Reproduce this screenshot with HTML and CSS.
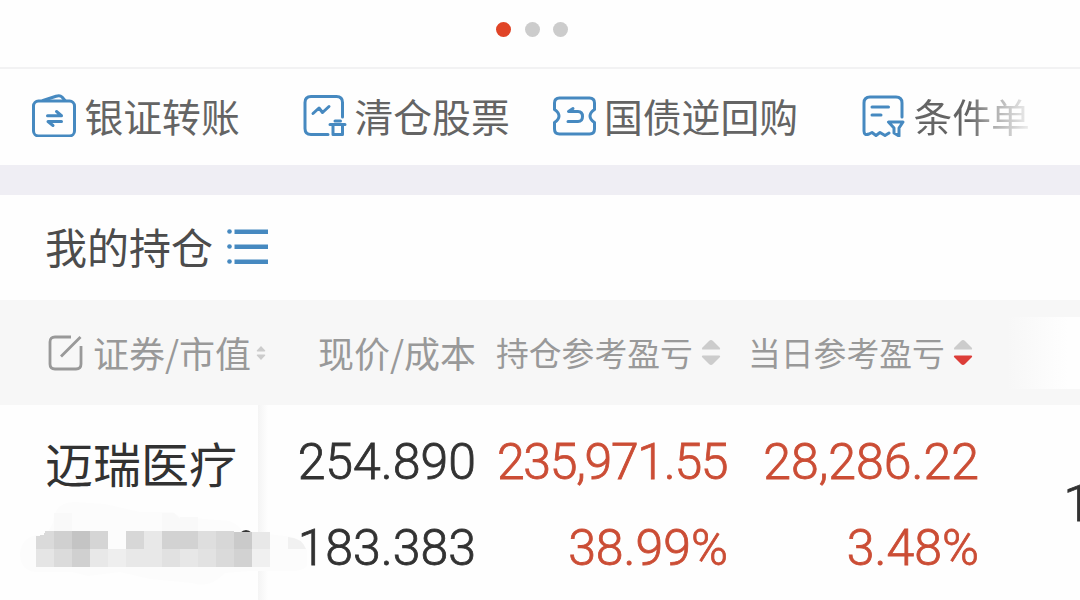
FILE: index.html
```html
<!DOCTYPE html>
<html lang="zh-CN">
<head>
<meta charset="utf-8">
<title>我的持仓</title>
<link rel="stylesheet" href="styles.css">
</head>
<body>
<div class="pager"><span class="dot dot-on"></span><span class="dot"></span><span class="dot"></span></div>

<nav class="tools">
  <a class="tool">
    <svg class="tool-icon" viewBox="0 0 46 46"><g class="line"><rect x="2.5" y="10" width="41" height="35" rx="5"/><path d="M12 9.5L25 5.300Q29 4 31 6L34 9.500"/><path d="M16.500 24.700H30.500L25.500 20.500M30.500 30.500H17L22 34.500"/></g></svg>
    <span class="tool-name">银证转账</span>
  </a>
  <a class="tool">
    <svg class="tool-icon" viewBox="0 0 46 46"><g class="line"><path d="M41.500 26V11.500Q41.500 5.500 35.500 5.500H10Q4 5.500 4 11.500V37.500Q4 43.500 10 43.500H27"/><path d="M12 22.500L18 17L21.500 21.500L28 15.500"/><path d="M29 33.500H44M32 34V43.500H41.500V34M34 30H39.500"/></g></svg>
    <span class="tool-name">清仓股票</span>
  </a>
  <a class="tool">
    <svg class="tool-icon" viewBox="0 0 46 46"><path class="line" d="M8.500 7H38.500Q43.500 7 43.500 12V18.500Q39 21.500 39 25Q39 28.500 43.500 31.500V38Q43.500 43 38.500 43H8.500Q3.500 43 3.500 38V31.500Q8 28.500 8 25Q8 21.500 3.500 18.500V12Q3.500 7 8.500 7Z"/><path class="line" d="M22 17.500L17.500 20.500H27Q31.500 20.500 31.500 25.500Q31.500 30.500 27 30.500H17"/></svg>
    <span class="tool-name">国债逆回购</span>
  </a>
  <a class="tool">
    <svg class="tool-icon" viewBox="0 0 46 46"><g class="line"><path d="M42 26V12Q42 6 36 6H10Q4 6 4 12V40Q4 45 9 43L12 41.500L16 44.500L20 41.500L25 44.500L29 42"/><path d="M12 16H28.500M12 24H21"/><path d="M28.500 31H43L39 37V45L34 42V37Z"/></g></svg>
    <span class="tool-name tool-fade">条件单</span>
  </a>
</nav>

<div class="band"></div>

<header class="title">
  <h1>我的持仓</h1>
  <svg class="list-icon" viewBox="0 0 42 36"><circle cx="2.500" cy="2.500" r="2.300"/><circle cx="2.500" cy="17.500" r="2.300"/><circle cx="2.500" cy="32.500" r="2.300"/><path d="M7.500 .5H41V5H7.500ZM7.500 15.500H41V20H7.500ZM7.500 30.500H41V35H7.500Z"/></svg>
</header>

<div class="heads">
  <div class="head head-name">
    <svg class="edit-icon" viewBox="0 0 36 36"><path d="M23 2H7Q2 2 2 7V29Q2 34 7 34H28Q33 34 33 29V11M13 21.500L32.500 2"/></svg>
    <span class="big">证券/市值</span>
    <svg class="sort-small" viewBox="0 0 20 28"><path d="M10 0L18.500 9Q19 11 17 11H3Q1 11 1.500 9ZM10 28L18.500 19Q19 17 17 17H3Q1 17 1.500 19Z"/></svg>
  </div>
  <div class="head"><span class="big">现价/成本</span></div>
  <div class="head">
    <span>持仓参考盈亏</span>
    <svg class="sort" viewBox="0 0 20 26"><path d="M10 0Q11 0 12 1L18.500 7.500Q20 9.500 18 9.500H2Q0 9.500 1.500 7.500L8 1Q9 0 10 0Z"/><path d="M10 25Q11 25 12 24L18.500 17.500Q20 15.500 18 15.500H2Q0 15.500 1.500 17.500L8 24Q9 25 10 25Z"/></svg>
  </div>
  <div class="head">
    <span>当日参考盈亏</span>
    <svg class="sort" viewBox="0 0 20 26"><path d="M10 0Q11 0 12 1L18.500 7.500Q20 9.500 18 9.500H2Q0 9.500 1.500 7.500L8 1Q9 0 10 0Z"/><path class="active" d="M10 25Q11 25 12 24L18.500 17.500Q20 15.500 18 15.500H2Q0 15.500 1.500 17.500L8 24Q9 25 10 25Z"/></svg>
  </div>
  <div class="edge-fade"></div>
</div>

<main class="holding">
  <div class="stock">迈瑞医疗</div>
  <div class="figures"><span>254.890</span><span>183.383</span></div>
  <div class="figures gain"><span class="tight">235,971.55</span><span>38.99%</span></div>
  <div class="figures gain"><span>28,286.22</span><span>3.48%</span></div>
  <div class="next">1</div>
  <svg class="mosaic" viewBox="0 0 310 95">
    <path fill="#fcfcfc" d="M36 40H44Q53 33 54 22Q57 7 75 7L105 9L140 17L173 17L180 22L205 24L230 26Q239 30 242 36L285 41Q303 42 307 56V70Q305 76 290 76H250L225 78Q210 94 192 88L150 84L120 77L88 81L72 77H36Q20 76 20 58Q22 43 36 40Z"/>
    <path fill="#f9f9f9" d="M54 18H72V36H54ZM162 18H174L180 24V36H162ZM180 22H198V36H180Z"/>
    <path fill="#333" d="M240 38Q246 32 252 38Z"/>
    <g shape-rendering="crispEdges">
      <path fill="#dadada" d="M36 41L44 40L45 36H54V54H36Z"/>
      <path fill="#d0d0d0" d="M54 36h18v18h-18z"/><path fill="#c4c4c4" d="M72 36h18v18h-18z"/><path fill="#d5d5d5" d="M90 36h18v18h-18z"/><path fill="#fcfcfc" d="M108 36h18v18h-18z"/><path fill="#d7d7d7" d="M126 36h18v18h-18z"/><path fill="#e8e8e8" d="M144 36h18v18h-18z"/><path fill="#d2d2d2" d="M162 36h36v18h-36z"/><path fill="#dedede" d="M198 36h18v18h-18z"/><path fill="#d7d7d7" d="M216 36h18v18h-18z"/><path fill="#cacaca" d="M234 37h18v17h-18z"/><path fill="#e8e8e8" d="M252 37h18v17h-18z"/>
      <path fill="#e5e5e5" d="M36 54h18v18h-18z"/><path fill="#dbdbdb" d="M54 54h18v18h-18z"/><path fill="#d0d0d0" d="M72 54h18v18h-18z"/><path fill="#e8e8e8" d="M90 54h18v18h-18z"/><path fill="#eee" d="M108 54h18v18h-18z"/><path fill="#e8e8e8" d="M126 54h36v18h-36z"/><path fill="#e1e1e1" d="M162 54h18v18h-18z"/><path fill="#e7e7e7" d="M180 54h18v18h-18z"/><path fill="#e2e2e2" d="M198 54h18v18h-18z"/><path fill="#dadada" d="M216 54h18v18h-18z"/><path fill="#d2d2d2" d="M234 54h18v18h-18z"/><path fill="#f0f0f0" d="M252 54h18v18h-18z"/>
    </g>
    <path fill="#f1f1f1" d="M288 42Q302 43 306 54H288Z"/>
  </svg>
</main>
</body>
</html>
```
FILE: styles.css
```css
* { box-sizing: border-box; }
body {
  margin: 0;
  width: 1080px;
  height: 600px;
  overflow: hidden;
  background: #fefefe;
  color: #323232;
  font-family: "Noto Sans CJK SC", sans-serif;
}
.pager {
  height: 69px;
  padding: 22px 0 0 496.400px;
  display: flex;
  gap: 13.5px;
  border-bottom: 2px solid #f2f2f3;
}
.dot { width: 15px; height: 15px; border-radius: 50%; background: #ccc; }
.dot-on { background: #e04427; }

.tools {
  height: 96px;
  display: grid;
  grid-template-columns: 270px 249.500px 309.500px 251px;
  padding-left: 31px;
}
.tool { display: flex; gap: 7.500px; align-items: flex-start; padding-top: 22px; white-space: nowrap; }
.tool-icon { width: 46px; height: 46px; flex: none; }
.line { fill: none; stroke: #4689c0; stroke-width: 3; stroke-linecap: round; stroke-linejoin: round; }
.tool-name { margin-top: -3px; font-size: 38.800px; line-height: 54px; color: #646464; }
.tool-fade {
  background: linear-gradient(90deg, #646464 55px, #aaa 78px, #e8e8e8 112px);
  background-clip: text;
  -webkit-background-clip: text;
  color: transparent;
}
.band { height: 30px; background: #efeef4; }

.title { height: 105px; display: flex; padding-left: 45px; gap: 14px; align-items: flex-start; }
.title h1 { margin: 22px 0 0; font-size: 42px; line-height: 58px; font-weight: 400; color: #4c4c4c; }
.list-icon { width: 42px; height: 36px; margin-top: 34px; fill: #4689c0; }

.heads {
  height: 105px;
  display: grid;
  grid-template-columns: 270px 178px 252px 260px 72px;
  padding-left: 48px;
  background: #f7f7f7;
  color: #999;
}
.head { display: flex; align-items: center; font-size: 32.800px; white-space: nowrap; }
.head span { line-height: 50px; padding-bottom: 2px; }
.head .big { font-size: 36px; }
.edit-icon { width: 36px; height: 36px; margin-right: 9px; fill: none; stroke: #999; stroke-width: 2.800; }
.sort-small { width: 12px; height: 14px; margin-left: 4px; fill: #ccc; }
.sort { width: 20px; height: 26px; margin-left: 8px; fill: #ccc; }
.sort .active { fill: #dc3d38; }
.edge-fade { height: 72px; margin-top: 17px; background: linear-gradient(90deg, #f7f7f7, #fefefe 60px); }

.holding {
  height: 195px;
  position: relative;
  display: grid;
  grid-template-columns: 258px 218px 252px 251px 101px;
}
.stock { padding: 25px 0 0 45px; font-size: 48px; line-height: 64px; }
.figures {
  display: flex;
  flex-direction: column;
  align-items: flex-end;
  padding-top: 25px;
  gap: 22px;
  font-family: Roboto, sans-serif;
  font-size: 50px;
  font-weight: 300;
  line-height: 64px;
  -webkit-text-stroke: .8px currentColor;
}
.stock + .figures { background: linear-gradient(90deg, #f4f4f4, #fefefe 10px); }
.gain { color: #cb4d35; }
.tight { letter-spacing: -1.300px; margin-right: .7px; }
.next {
  padding: 67px 0 0 84.500px;
  font: 300 50px/64px Roboto, sans-serif;
  -webkit-text-stroke: .8px currentColor;
  overflow: hidden;
}
.mosaic { position: absolute; left: 0; top: 90px; width: 310px; height: 95px; }
```
